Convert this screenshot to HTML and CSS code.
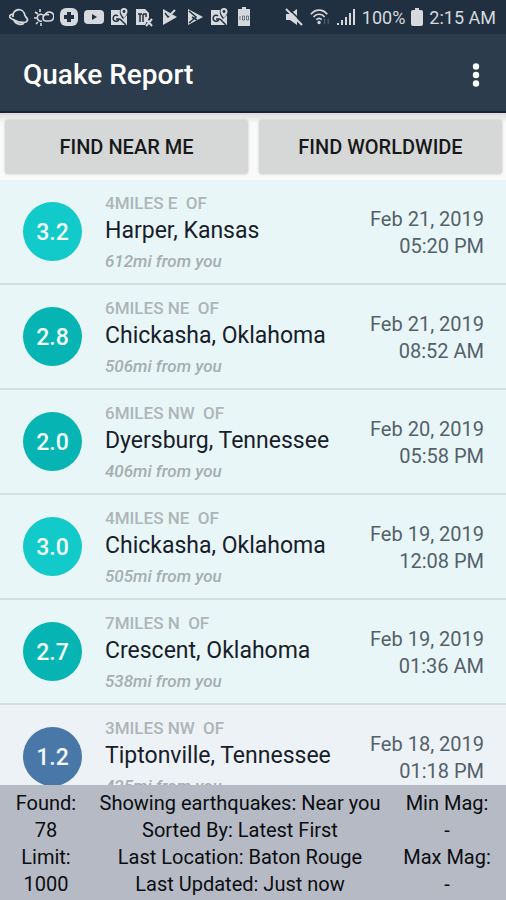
FILE: index.html
```html
<!DOCTYPE html>
<html lang="en">
<head>
  <meta charset="UTF-8">
  <meta name="viewport" content="width=device-width, initial-scale=1.0">
  <title>Quake Report</title>
  <link rel="stylesheet" href="styles.css">
</head>
<body>
  <div class="app">
    <div class="status-bar">
      <div class="status-icons">
        <svg class="status-icon" viewBox="0 0 20 20" fill="none" stroke="currentColor" stroke-width="1.8"><path d="M4 10C3 1 15 0 16 9M4 7C0 8-1 10 3 12c5 3 10 4 14 3 3-2 1-4-1-6M5 14c3 4 8 4 10 2"/></svg>
        <svg class="status-icon" viewBox="0 0 20 20" fill="none" stroke="currentColor" stroke-width="1.600"><path d="M8 14a3.500 3.500 0 1 1 1-6M6 2v3M1 5l3 2M0 11h3M2 17l2-2M7 16v3M11 14h4a4.500 4.500 0 1 0-4-6M15 8c-2-1-6-1-6 3 0 2 1 3 3 3"/></svg>
        <svg class="status-icon" viewBox="0 0 20 20"><rect x="1" y="1" width="18" height="18" rx="6" fill="currentColor"/><path class="cut" d="M8 5h4v3h3v4h-3v3H8v-3H5V8h3z"/></svg>
        <svg class="status-icon" viewBox="0 0 20 20"><rect x="0" y="3" width="20" height="14" rx="4" fill="currentColor"/><path class="cut" d="M8 7l5 3-5 3z"/></svg>
        <svg class="status-icon" viewBox="0 0 20 20"><path d="M2 3h9c-1 4 1 6 3 9l4-4v10H2z" fill="currentColor"/><path class="cut-line" d="M9 9a3 3 0 1 0 1 3H7M11 12l6 6"/><path d="M15 1a3.500 3.500 0 0 0-3.500 3.500C11.500 7 15 11 15 11s3.500-4 3.500-6.500A3.500 3.500 0 0 0 15 1z" fill="currentColor"/><circle class="cut" cx="15" cy="4.500" r="1.400"/></svg>
        <svg class="status-icon" viewBox="0 0 20 20"><path d="M2 2h9l4 4v5l-4 7H2z" fill="currentColor"/><path class="cut-line" d="M4 7h4M6 7v8M9 7v8M9 7h3v3"/><path d="M12 12l6 7M18 12l-6 7" stroke="currentColor" stroke-width="2"/></svg>
        <svg class="status-icon" viewBox="0 0 20 20"><path d="M4 2l14 8L4 18z" fill="currentColor"/><path class="cut-line" d="M6 6l3 4 8-7"/><path d="M10 9l6-6" stroke="currentColor" stroke-width="2"/></svg>
        <svg class="status-icon" viewBox="0 0 20 20"><path d="M4 2l15 8-15 8z" fill="currentColor"/><path class="cut-line" d="M5 4l7 6-7 6M8 10l5 3"/></svg>
        <svg class="status-icon" viewBox="0 0 20 20"><path d="M2 3h9c-1 4 1 6 3 9l4-4v10H2z" fill="currentColor"/><path class="cut-line" d="M9 9a3 3 0 1 0 1 3H7M11 12l6 6"/><path d="M15 1a3.500 3.500 0 0 0-3.500 3.500C11.500 7 15 11 15 11s3.500-4 3.500-6.500A3.500 3.500 0 0 0 15 1z" fill="currentColor"/><circle class="cut" cx="15" cy="4.500" r="1.400"/></svg>
        <svg class="status-icon" viewBox="0 0 20 20"><path d="M8 0h4v2h4v17H4V2h4z" fill="currentColor"/><path d="M6 9v4M8.500 9h2v4h-2zM12.500 9h2v4h-2z" fill="none" stroke="#213040" stroke-width=".8" opacity=".7"/></svg>
      </div>
      <div class="status-info">
        <svg class="status-icon" viewBox="0 0 20 20"><path d="M2 7h4l7-5v16l-7-5H2z" fill="currentColor"/><path class="cut-line" d="M4 1l15 15"/><path d="M2 2l16 16" stroke="currentColor" stroke-width="2"/></svg>
        <svg class="status-icon" viewBox="0 0 22 20" fill="none" stroke="currentColor" stroke-width="1.800"><path d="M1 7c5-6 13-6 18 0M4 10c3-4 9-4 12 0M7 13c2-2 4-2 6 0"/><circle cx="10" cy="16" r="1"/><path d="M16 12v6M20 12v6" stroke-width="1.200" opacity=".3"/></svg>
        <svg class="status-icon" viewBox="0 0 20 20" fill="currentColor"><path d="M1 16h2v2H1zM5 13h2v5H5zM9 10h2v8H9zM13 6h2v12h-2zM17 2h2v16h-2z"/></svg>
        <span>100%</span>
        <svg class="battery" viewBox="0 0 12 20" fill="currentColor"><path d="M4 1h4v2h2q2 0 2 2v12q0 2-2 2H2q-2 0-2-2V5q0-2 2-2h2z"/></svg>
        <span>2:15 AM</span>
      </div>
    </div>

    <header class="app-bar">
      <h1>Quake Report</h1>
      <button class="menu-button" type="button" aria-label="More options">
        <svg viewBox="0 0 8 24" fill="currentColor"><circle cx="4" cy="3.500" r="3.200"/><circle cx="4" cy="12" r="3.200"/><circle cx="4" cy="20.500" r="3.200"/></svg>
      </button>
    </header>

    <div class="actions">
      <button class="action-button" type="button">FIND NEAR ME</button>
      <button class="action-button" type="button">FIND WORLDWIDE</button>
    </div>

    <ul class="quake-list">
      <li class="quake">
        <span class="magnitude mag-3">3.2</span>
        <div class="location">
          <span class="offset">4MILES E&nbsp; OF</span>
          <span class="place">Harper, Kansas</span>
          <span class="distance">612mi from you</span>
        </div>
        <div class="date">Feb 21, 2019<br>05:20 PM</div>
      </li>
      <li class="quake">
        <span class="magnitude mag-2">2.8</span>
        <div class="location">
          <span class="offset">6MILES NE&nbsp; OF</span>
          <span class="place">Chickasha, Oklahoma</span>
          <span class="distance">506mi from you</span>
        </div>
        <div class="date">Feb 21, 2019<br>08:52 AM</div>
      </li>
      <li class="quake">
        <span class="magnitude mag-2">2.0</span>
        <div class="location">
          <span class="offset">6MILES NW&nbsp; OF</span>
          <span class="place">Dyersburg, Tennessee</span>
          <span class="distance">406mi from you</span>
        </div>
        <div class="date">Feb 20, 2019<br>05:58 PM</div>
      </li>
      <li class="quake">
        <span class="magnitude mag-3">3.0</span>
        <div class="location">
          <span class="offset">4MILES NE&nbsp; OF</span>
          <span class="place">Chickasha, Oklahoma</span>
          <span class="distance">505mi from you</span>
        </div>
        <div class="date">Feb 19, 2019<br>12:08 PM</div>
      </li>
      <li class="quake">
        <span class="magnitude mag-2">2.7</span>
        <div class="location">
          <span class="offset">7MILES N&nbsp; OF</span>
          <span class="place">Crescent, Oklahoma</span>
          <span class="distance">538mi from you</span>
        </div>
        <div class="date">Feb 19, 2019<br>01:36 AM</div>
      </li>
      <li class="quake minor">
        <span class="magnitude mag-1">1.2</span>
        <div class="location">
          <span class="offset">3MILES NW&nbsp; OF</span>
          <span class="place">Tiptonville, Tennessee</span>
          <span class="distance">425mi from you</span>
        </div>
        <div class="date">Feb 18, 2019<br>01:18 PM</div>
      </li>
    </ul>

    <footer class="summary">
      <div>Found:<br>78<br>Limit:<br>1000</div>
      <div>Showing earthquakes: Near you<br>Sorted By: Latest First<br>Last Location: Baton Rouge<br>Last Updated: Just now</div>
      <div>Min Mag:<br>-<br>Max Mag:<br>-</div>
    </footer>
  </div>
</body>
</html>
```

FILE: styles.css
```css
* {
  margin: 0;
  padding: 0;
  box-sizing: border-box;
}

body {
  font-family: Roboto, sans-serif;
  background: #fafafa;
  color: #17202a;
}

.app {
  display: flex;
  flex-direction: column;
  height: 100vh;
  overflow: hidden;
}

/* Status bar */
.status-bar {
  display: flex;
  justify-content: space-between;
  align-items: center;
  flex-shrink: 0;
  height: 34px;
  padding: 0 10px 0 9px;
  background: #213040;
  color: #d5d9de;
  font-size: 18px;
  white-space: nowrap;
}

.status-icons {
  display: flex;
  gap: 5px;
}

.status-info {
  display: flex;
  align-items: center;
  gap: 6px;
}

.status-icon {
  width: 20px;
  height: 20px;
}

.battery {
  width: 12px;
  height: 20px;
}

.cut {
  fill: #213040;
}

.cut-line {
  fill: none;
  stroke: #213040;
  stroke-width: 1.5;
}

/* App bar */
.app-bar {
  display: flex;
  justify-content: space-between;
  align-items: center;
  flex-shrink: 0;
  height: 79px;
  padding: 4px 26px 0 23px;
  background: #2c3c4c;
  border-bottom: 2px solid #16213c;
  color: #fff;
}

.app-bar h1 {
  font-size: 28px;
  font-weight: 500;
}

.menu-button {
  width: 8px;
  height: 24px;
  border: none;
  background: none;
  color: #fff;
  cursor: pointer;
}

.menu-button svg {
  display: block;
}

/* Find buttons */
.actions {
  display: flex;
  flex-shrink: 0;
  gap: 11px;
  padding: 7px 4px 6px 5px;
  background: linear-gradient(#dcdadb, #fafafa 10px);
}

.action-button {
  flex: 1;
  height: 54px;
  border: none;
  border-radius: 3px;
  background: #d6d7d7;
  box-shadow: 0 0 3px rgba(0, 0, 0, 0.2);
  color: #17191b;
  font-family: inherit;
  font-size: 20px;
  font-weight: 500;
  cursor: pointer;
}

/* Earthquake list */
.quake-list {
  flex: 1;
  min-height: 0;
  overflow: hidden;
  list-style: none;
}

.quake {
  display: flex;
  align-items: center;
  height: 105px;
  padding: 0 22px 0 23px;
  background: #e9f6f7;
  border-bottom: 2px solid #d2dfe0;
}

.quake.minor {
  background: #edf2f6;
}

.magnitude {
  width: 59px;
  height: 59px;
  margin-right: 23px;
  border-radius: 50%;
  color: #f2fafa;
  font-size: 23px;
  font-weight: 500;
  line-height: 61px;
  text-align: center;
}

.mag-1 {
  background: #4977a8;
}

.mag-2 {
  background: #06b5b3;
}

.mag-3 {
  background: #12cac9;
}

.location {
  display: flex;
  flex: 1;
  flex-direction: column;
  padding-top: 2px;
  white-space: nowrap;
}

.offset {
  color: #adb5b7;
  font-size: 17px;
  font-weight: 500;
  line-height: 24px;
}

.place {
  font-size: 23px;
  line-height: 32px;
}

.distance {
  color: #a5aeb0;
  font-size: 17px;
  font-style: italic;
  font-weight: 500;
  line-height: 28px;
}

.date {
  padding-top: 2px;
  color: #54616a;
  font-size: 20px;
  line-height: 27px;
  text-align: right;
  white-space: nowrap;
}

/* Summary */
.summary {
  display: grid;
  grid-template-columns: 92px 1fr 118px;
  flex-shrink: 0;
  padding: 5px 0 2px;
  background: #b6bac5;
  color: #0b0d10;
  font-size: 20px;
  line-height: 27px;
  text-align: center;
  white-space: nowrap;
}
```
